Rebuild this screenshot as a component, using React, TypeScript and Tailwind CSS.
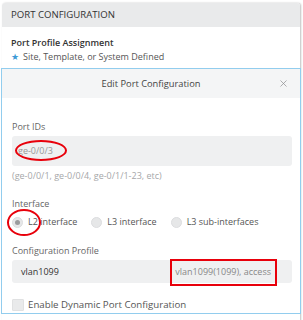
import { X } from "lucide-react";

function Radio({ label, checked, circled }: { label: string; checked?: boolean; circled?: boolean }) {
	return (
		<div className="relative flex items-center gap-[5px]">
			<span className="w-[11px] h-[11px] rounded-full bg-[#e6e7e8] border border-[#dcdddf] flex items-center justify-center">
				{checked && <span className="w-[5px] h-[5px] rounded-full bg-[#9a9b9d]"></span>}
			</span>
			<span>{label}</span>
			{circled && <span className="absolute left-[-5px] top-[-6px] w-[34px] h-[27px] rounded-[50%] border-[2.5px] border-[#e8000b]"></span>}
		</div>
	);
}

export default function App() {
	return (
		<div className="w-[303px] h-[320px] bg-white overflow-hidden font-['Open_Sans',sans-serif] text-[#333]">
			<div className="ml-[2px] mt-[3px] w-[298px] h-[330px] rounded-t-[3px] bg-white shadow-[1px_0_2px_rgba(0,0,0,0.25)]">
				{/* Card header */}
				<div className="h-[24px] bg-[#e9eaeb] rounded-t-[3px] px-[9px] flex items-center text-[9.6px]">
					PORT CONFIGURATION
				</div>

				<div className="px-[9px] pt-[9px]">
					<div className="text-[9px] font-semibold leading-[14px]">Port Profile Assignment</div>
					<div className="flex items-center gap-[4px] text-[9px] leading-[14px] text-[#555]">
						<span className="text-[#3d9ad6] text-[9px]">★</span>
						<span>Site, Template, or System Defined</span>
					</div>
				</div>

				{/* Modal */}
				<div className="mt-[4px] -ml-[1px] w-[300px] border border-[#92cdee] bg-white">
					<div className="h-[29px] bg-[#f4f5f6] relative flex items-center justify-center text-[9.3px] text-[#444]">
						Edit Port Configuration
						<X className="absolute right-[11px] top-[9px] w-[11px] h-[11px] text-[#8a8b8d]" strokeWidth={1.5} />
					</div>

					<div className="px-[10px] pt-[22px] text-[9px] text-[#666]">
						<div className="leading-[14px]">Port IDs</div>
						<div className="relative mt-[2px] h-[30px] w-[280px] bg-[#eff0f1] rounded-[3px] flex items-center px-[6px] text-[#999]">
							ge-0/0/3
							<span className="absolute left-[3px] top-[4px] w-[52px] h-[21px] rounded-[50%] border-[2.5px] border-[#e8000b]"></span>
						</div>
						<div className="mt-[3px] leading-[14px] text-[#a6a7a9]">(ge-0/0/1, ge-0/0/4, ge-0/1/1-23, etc)</div>

						<div className="mt-[14px] leading-[14px]">Interface</div>
						<div className="mt-[4px] flex items-center gap-[14px] text-[#555] leading-[14px]">
							<Radio label="L2 interface" checked circled />
							<Radio label="L3 interface" />
							<Radio label="L3 sub-interfaces" />
						</div>

						<div className="mt-[15px] leading-[14px]">Configuration Profile</div>
						<div className="relative mt-[2px] h-[23px] w-[280px] bg-[#eff0f1] rounded-[3px] flex items-center justify-between pl-[9px] pr-[21px] text-[#333]">
							<span>vlan1099</span>
							<span className="text-[#888]">vlan1099(1099), access</span>
							<span className="absolute left-[158px] top-[-1px] w-[107px] h-[27px] border-[2.5px] border-[#e8000b]"></span>
						</div>

						<div className="mt-[15px] flex items-center gap-[4px] text-[#555] text-[9.7px]">
							<span className="w-[12px] h-[12px] bg-[#e9eaeb] border border-[#e0e1e2] rounded-[1px]"></span>
							<span>Enable Dynamic Port Configuration</span>
						</div>
					</div>
				</div>
			</div>
		</div>
	);
}
